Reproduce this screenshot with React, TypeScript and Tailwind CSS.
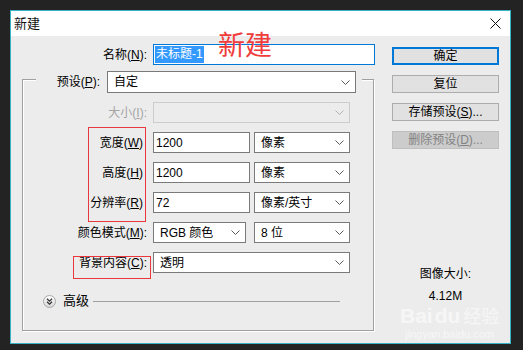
import React from 'react';

const font = "font-['Liberation_Sans','Noto_Sans_CJK_SC',sans-serif]";

function Chevron({ light }: { light?: boolean }) {
  return (
    <svg width="9" height="5" viewBox="0 0 9 5" className="shrink-0">
      <polyline
        points="0.5,0.5 4.5,4.5 8.5,0.5"
        fill="none"
        stroke={light ? '#b0b0b0' : '#5a5a5a'}
        strokeWidth="1"
      />
    </svg>
  );
}

function Select({ value, width, disabled }: { value?: string; width: string; disabled?: boolean }) {
  if (disabled) {
    return (
      <div className={`${width} h-full flex items-center justify-end border border-[#cccccc] bg-[#ececec] pr-[5px]`}>
        <Chevron light />
      </div>
    );
  }
  return (
    <div className={`${width} h-full flex items-center justify-between border border-[#7a7a7a] bg-white pl-[6px] pr-[5px]`}>
      <span>{value}</span>
      <Chevron />
    </div>
  );
}

function Field({ value, width }: { value: string; width: string }) {
  return (
    <div className={`${width} h-full flex items-center border border-[#7a7a7a] bg-white pl-[2px]`}>
      {value}
    </div>
  );
}

function Label({ children, gray, pad }: { children: React.ReactNode; gray?: boolean; pad?: boolean }) {
  return (
    <div
      className={`w-[124px] shrink-0 text-right ${gray ? 'text-[#a5a5a5]' : 'text-black'} ${pad ? 'pr-[4px]' : ''}`}
    >
      {children}
    </div>
  );
}

function Button({ children, primary, disabled }: { children: React.ReactNode; primary?: boolean; disabled?: boolean }) {
  if (primary) {
    return (
      <div className="h-[18px] flex items-center justify-center border-2 border-[#0078d7] bg-[#e1e1e1] text-black">
        {children}
      </div>
    );
  }
  if (disabled) {
    return (
      <div className="h-[18px] flex items-center justify-center border border-[#bfbfbf] bg-[#cccccc] text-[#838383]">
        {children}
      </div>
    );
  }
  return (
    <div className="h-[18px] flex items-center justify-center border border-[#adadad] bg-[#e1e1e1] text-black">
      {children}
    </div>
  );
}

function AdvancedIcon() {
  return (
    <svg width="13" height="13" viewBox="0 0 13 13" className="shrink-0">
      <defs>
        <linearGradient id="adv" x1="0" y1="0" x2="0" y2="1">
          <stop offset="0" stopColor="#ffffff" />
          <stop offset="1" stopColor="#d6d6d6" />
        </linearGradient>
      </defs>
      <circle cx="6.5" cy="6.5" r="6" fill="url(#adv)" stroke="#a8a8a8" />
      <polyline points="4,3.8 6.5,6.2 9,3.8" fill="none" stroke="#333" strokeWidth="1.2" />
      <polyline points="4,6.8 6.5,9.2 9,6.8" fill="none" stroke="#333" strokeWidth="1.2" />
    </svg>
  );
}

export default function App() {
  return (
    <div className={`w-[523px] h-[350px] bg-[#232323] pl-[10px] pt-[10px] overflow-hidden text-[12px] leading-[16px] ${font}`}>
      <div className="relative w-[501px] h-[334px] border border-[#38b2c4] flex flex-col">
        {/* Title bar */}
        <div className="h-[25px] shrink-0 bg-white flex items-center justify-between pl-[3px] pr-[9px]">
          <span className="text-[13px] text-[#111]">新建</span>
          <svg width="11" height="11" viewBox="0 0 11 11">
            <path d="M0.5 0.5 L10.5 10.5 M10.5 0.5 L0.5 10.5" stroke="#111" strokeWidth="1" />
          </svg>
        </div>

        {/* Body */}
        <div className="flex-1 bg-[#ececec] flex">
          {/* Left column */}
          <div className="w-[364px] shrink-0 flex flex-col">
            <div className="mt-[8px] h-[21px] flex items-center">
              <div className="w-[136px] text-right">
                名称(<span className="underline">N</span>):
              </div>
              <div className="ml-[6px] w-[222px] h-full flex items-center border border-[#0078d7] bg-white pl-[1px]">
                <span className="bg-[#3399ff] text-white leading-[17px] px-[1px]">未标题-1</span>
              </div>
            </div>

            {/* Group box */}
            <div className="mt-[14px] ml-[11px] w-[352px] h-[252px] border border-[#a0a0a0] shadow-[inset_1px_1px_0_#ffffff,1px_1px_0_#ffffff] flex flex-col">
              <div className="-mt-[9px] ml-[13px] w-fit h-[22px] bg-[#ececec] flex items-center pr-[6px]">
                <div className="w-[64px] text-right">
                  预设(<span className="underline">P</span>):
                </div>
                <div className="ml-[7px] h-full">
                  <Select value="自定" width="w-[249px]" />
                </div>
              </div>

              <div className="mt-[9px] flex flex-col gap-[9px]">
                <div className="h-[21px] flex items-center">
                  <Label gray>
                    大小(<span className="underline">I</span>):
                  </Label>
                  <div className="ml-[6px] h-full">
                    <Select width="w-[197px]" disabled />
                  </div>
                </div>
                <div className="h-[21px] flex items-center">
                  <Label pad>
                    宽度(<span className="underline">W</span>)
                  </Label>
                  <div className="ml-[6px] h-full flex gap-[4px]">
                    <Field value="1200" width="w-[97px]" />
                    <Select value="像素" width="w-[96px]" />
                  </div>
                </div>
                <div className="h-[21px] flex items-center">
                  <Label pad>
                    高度(<span className="underline">H</span>)
                  </Label>
                  <div className="ml-[6px] h-full flex gap-[4px]">
                    <Field value="1200" width="w-[97px]" />
                    <Select value="像素" width="w-[96px]" />
                  </div>
                </div>
                <div className="h-[21px] flex items-center">
                  <Label pad>
                    分辨率(<span className="underline">R</span>)
                  </Label>
                  <div className="ml-[6px] h-full flex gap-[4px]">
                    <Field value="72" width="w-[97px]" />
                    <Select value="像素/英寸" width="w-[96px]" />
                  </div>
                </div>
                <div className="h-[21px] flex items-center">
                  <Label>
                    颜色模式(<span className="underline">M</span>):
                  </Label>
                  <div className="ml-[6px] h-full flex gap-[8px]">
                    <Select value="RGB 颜色" width="w-[93px]" />
                    <Select value="8 位" width="w-[96px]" />
                  </div>
                </div>
                <div className="h-[21px] flex items-center">
                  <Label>
                    背景内容(<span className="underline">C</span>):
                  </Label>
                  <div className="ml-[6px] h-full">
                    <Select value="透明" width="w-[197px]" />
                  </div>
                </div>
              </div>

              <div className="mt-[21px] ml-[20px] h-[14px] flex items-center">
                <AdvancedIcon />
                <span className="ml-[7px] text-[13px]">高级</span>
                <div className="ml-[4px] w-[247px] h-px bg-[#a0a0a0]" />
              </div>
            </div>
          </div>

          {/* Right column */}
          <div className="ml-[17px] w-[107px] pt-[11px] flex flex-col">
            <div className="flex flex-col gap-[10px]">
              <Button primary>确定</Button>
              <Button>复位</Button>
              <Button>
                存储预设(<span className="underline">S</span>)...
              </Button>
              <Button disabled>
                删除预设(<span className="underline">D</span>)...
              </Button>
            </div>
            <div className="mt-[117px] text-center">图像大小:</div>
            <div className="mt-[6px] text-center">4.12M</div>
          </div>
        </div>

        {/* Annotations */}
        <div className="absolute left-[207px] top-[22px] text-[27px] leading-none text-[#f03c3c]">新建</div>
        <div className="absolute left-[77px] top-[116px] w-[58px] h-[95px] border border-[#e8383d]" />
        <div className="absolute left-[62px] top-[245px] w-[78px] h-[23px] border border-[#e8383d]" />

        {/* Watermark */}
        <div className="absolute left-[389px] top-[294px] flex flex-col items-center text-white/55 pointer-events-none">
          <div className="flex items-baseline text-[21px] leading-none font-bold">
            <span>Bai</span>
            <span className="ml-[2px]">du</span>
            <span className="ml-[3px] text-[18px] font-normal">经验</span>
          </div>
          <div className="mt-[3px] text-[11px] leading-none">jingyan.baidu.com</div>
        </div>
      </div>
    </div>
  );
}
